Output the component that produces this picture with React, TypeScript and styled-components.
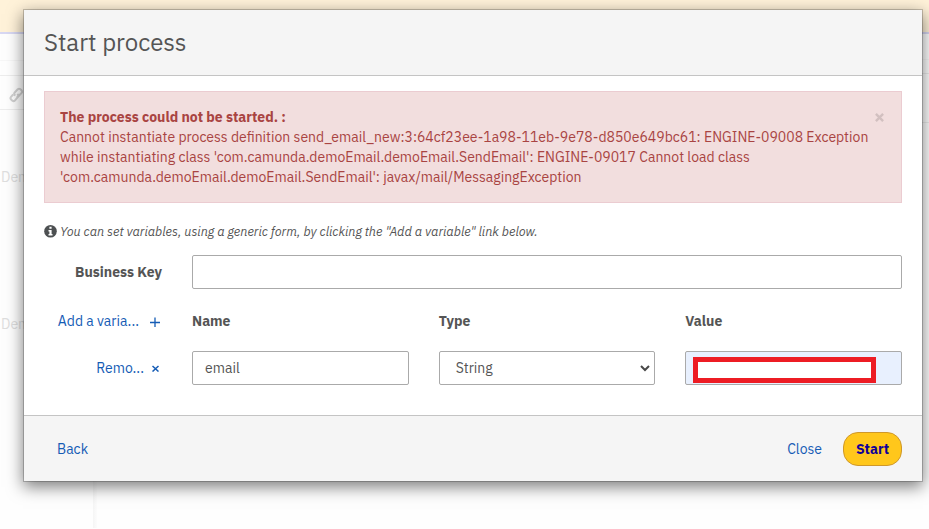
import React from "react";
import styled, { createGlobalStyle } from "styled-components";

const GlobalStyle = createGlobalStyle`
  *, *::before, *::after { box-sizing: border-box; }
  body {
    margin: 0;
    background: #fefefe;
    color: #555;
    font: 14px/20px "IBM Plex Sans", Roboto, "Liberation Sans", sans-serif;
    overflow: hidden;
  }
`;

const Page = styled.div`
  position: relative;
  height: 529px;
  padding: 9px 6px 0 23px;
  overflow: hidden;
`;

const Backdrop = styled.div`
  position: absolute;
  inset: 0;
`;

const Banner = styled.div`
  height: 34px;
  background: #fff2d9;
  border-bottom: 2px solid #d8d8f3;
`;

const Rule = styled.div<{ $y: number; $side: "left" | "right"; $tone?: string }>`
  position: absolute;
  top: ${(p) => p.$y}px;
  ${(p) => p.$side}: 0;
  width: 60px;
  height: 1px;
  background: ${(p) => p.$tone ?? "#ededed"};
`;

const Divider = styled.div`
  position: absolute;
  left: 93px;
  top: 300px;
  bottom: 1px;
  width: 4px;
  background: linear-gradient(90deg, #f5f5f5, #fcfcfc);
`;

const GhostText = styled.span<{ $y: number }>`
  position: absolute;
  left: 1px;
  top: ${(p) => p.$y}px;
  color: #dedede;
`;

const GhostLink = styled.svg`
  position: absolute;
  left: 9px;
  top: 87px;
`;

const Modal = styled.section`
  position: relative;
  height: 473px;
  display: flex;
  flex-direction: column;
  background: #fff;
  background-clip: padding-box;
  border: 1px solid rgba(0, 0, 0, 0.2);
  box-shadow: 0 5px 15px rgba(0, 0, 0, 0.5);
`;

const Header = styled.header`
  height: 66px;
  padding: 0 20px;
  background: #f5f5f5;
  border-bottom: 1px solid #c4c4c4;
`;

const Title = styled.h3`
  margin: 0;
  font-size: 24px;
  font-weight: 400;
  line-height: 64px;
`;

const Body = styled.div`
  flex: 1;
  padding: 15px 20px 0;
`;

const Alert = styled.div`
  display: flex;
  justify-content: space-between;
  height: 112px;
  padding: 15px;
  color: #a94442;
  background: #f2dede;
  border: 1px solid #ebccd1;
`;

const Line = styled.div<{ $bold?: boolean }>`
  white-space: nowrap;
  font-weight: ${(p) => (p.$bold ? 700 : 400)};
`;

const Dismiss = styled.svg`
  flex: none;
  margin: 6px 2px 0 0;
`;

const Hint = styled.p`
  display: flex;
  align-items: center;
  gap: 3px;
  height: 20px;
  margin: 18px 0 14px;
  font-size: 12.6px;
  font-style: italic;
  white-space: nowrap;
`;

const Row = styled.div<{ $h: number; $top?: number }>`
  display: grid;
  grid-template-columns: 118px 1fr;
  column-gap: 30px;
  align-items: center;
  height: ${(p) => p.$h}px;
  padding-top: ${(p) => p.$top ?? 0}px;
`;

const Columns = styled.div`
  display: grid;
  grid-template-columns: repeat(3, 1fr);
  column-gap: 30px;
  align-items: center;
`;

const Label = styled.span<{ $right?: boolean }>`
  font-weight: 700;
  text-align: ${(p) => (p.$right ? "right" : "left")};
`;

const Link = styled.a`
  color: #155cb5;
  white-space: nowrap;
`;

const Action = styled.div<{ $gap: number; $end: number }>`
  display: flex;
  justify-content: flex-end;
  align-items: center;
  gap: ${(p) => p.$gap}px;
  padding-right: ${(p) => p.$end}px;
`;

const Field = styled.div<{ $filled?: boolean; $pad?: number }>`
  display: flex;
  align-items: center;
  justify-content: space-between;
  height: 34px;
  padding: 0 4px 0 ${(p) => p.$pad ?? 12}px;
  background: ${(p) => (p.$filled ? "#e8f0fe" : "#fff")};
  border: 1px solid #aaa;
  border-radius: 2px;
`;

const Redaction = styled.div`
  width: 183px;
  height: 26px;
  margin: 4px 0 0 -5px;
  background: #fff;
  border: 5px solid #ed1c24;
`;

const Footer = styled.footer`
  display: flex;
  align-items: center;
  height: 66px;
  padding: 0 20px 0 33px;
  background: #f5f5f5;
  border-top: 1px solid #c4c4c4;
`;

const Spacer = styled.span`
  flex: 1;
`;

const StartButton = styled.button`
  width: 59px;
  height: 34px;
  margin-left: 21px;
  padding: 0;
  color: #100099;
  font: inherit;
  font-weight: 700;
  background: #ffc71b;
  border: 1px solid #cf982a;
  border-radius: 15px;
`;

export default function App() {
  return (
    <Page>
      <GlobalStyle />
      <Backdrop>
        <Banner />
        <Rule $y={60} $side="left" $tone="#f7f7f7" />
        <Rule $y={75} $side="left" />
        <Rule $y={109} $side="left" />
        <Rule $y={59} $side="right" $tone="#f7f7f7" />
        <Rule $y={73} $side="right" />
        <Rule $y={122} $side="right" />
        <GhostLink width="15" height="16" viewBox="0 0 15 16" fill="none" stroke="#d0d0d0" strokeWidth="2">
          <path d="M6.200 8.600L5.300 7.500Q4.800 6.500 5.700 5.500L8.700 2.300Q9.900 1.200 11.200 2.100L12.700 3.500Q13.600 4.700 12.600 5.900L9.700 9Q8.700 9.900 7.600 9.300" />
          <path d="M8.300 7L9.200 8.100Q9.700 9.100 8.800 10.100L5.900 13.500Q4.700 14.600 3.400 13.700L1.900 12.300Q1 11.100 2 9.900L4.200 7.500" />
        </GhostLink>
        <GhostText $y={167}>Demo</GhostText>
        <GhostText $y={314}>Demo</GhostText>
        <Divider />
      </Backdrop>
      <Modal>
        <Header>
          <Title>Start process</Title>
        </Header>
        <Body>
          <Alert>
            <div>
              <Line $bold>The process could not be started. :</Line>
              <Line>
                Cannot instantiate process definition send_email_new:3:64cf23ee-1a98-11eb-9e78-d850e649bc61: ENGINE-09008 Exception
              </Line>
              <Line>while instantiating class 'com.camunda.demoEmail.demoEmail.SendEmail': ENGINE-09017 Cannot load class</Line>
              <Line>'com.camunda.demoEmail.demoEmail.SendEmail': javax/mail/MessagingException</Line>
            </div>
            <Dismiss width="9" height="9" viewBox="0 0 9 9" stroke="#d2c0c0" strokeWidth="2.4">
              <path d="M.9.9l7.200 7.200M8.100.9L.9 8.100" />
            </Dismiss>
          </Alert>
          <Hint>
            <svg width="13" height="13" viewBox="0 0 13 13">
              <circle cx="6.5" cy="6.3" r="6.3" fill="#4d5052" />
              <path d="M5.400 1.700h2.200v2H5.400zM4.500 4.900h3.100v4h.9v1.500h-4V8.900h.9V6.400h-.9z" fill="#fff" />
            </svg>
            <span>You can set variables, using a generic form, by clicking the "Add a variable" link below.</span>
          </Hint>
          <Row $h={34}>
            <Label $right>Business Key</Label>
            <Field />
          </Row>
          <Row $h={62} $top={2}>
            <Action $gap={11} $end={2}>
              <Link>Add a varia...</Link>
              <svg width="10" height="11" viewBox="0 0 10 11" stroke="#155cb5" strokeWidth="1.3">
                <path d="M0 6.500h10M5 1.500v10" />
              </svg>
            </Action>
            <Columns>
              <Label>Name</Label>
              <Label>Type</Label>
              <Label>Value</Label>
            </Columns>
          </Row>
          <Row $h={34}>
            <Action $gap={8} $end={3}>
              <Link>Remo...</Link>
              <svg width="7" height="7" viewBox="0 0 7 7" stroke="#155cb5" strokeWidth="1.500">
                <path d="M.5 1l6 5.500M6.500 1l-6 5.500" />
              </svg>
            </Action>
            <Columns>
              <Field>email</Field>
              <Field $pad={16}>
                String
                <svg width="10" height="7" viewBox="0 0 10 7" fill="none" stroke="#484848" strokeWidth="2">
                  <path d="M1 1l4 4 4-4" />
                </svg>
              </Field>
              <Field $filled>
                <Redaction />
              </Field>
            </Columns>
          </Row>
        </Body>
        <Footer>
          <Link>Back</Link>
          <Spacer />
          <Link>Close</Link>
          <StartButton>Start</StartButton>
        </Footer>
      </Modal>
    </Page>
  );
}
